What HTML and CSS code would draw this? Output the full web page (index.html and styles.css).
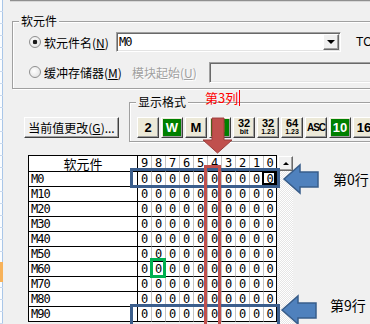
FILE: index.html
```html
<!DOCTYPE html>
<html lang="zh-CN">
<head>
    <meta charset="UTF-8">
    <title>软元件/缓冲存储器批量监视</title>
    <link rel="stylesheet" href="styles.css">
</head>
<body>
    <div class="strip"><div class="strip-mark"></div></div>

    <div class="main">
        <div class="topline"></div>

        <div class="group group-dev">
            <div class="group-title">软元件</div>
            <div class="opt-row opt-first">
                <span class="radio checked"></span>
                <span class="opt-label">软元件名(<u>N</u>)</span>
                <div class="field combo">
                    <span class="field-text">M0</span>
                    <span class="drop-btn"><i class="tri-down"></i></span>
                </div>
                <span class="tc">TC</span>
            </div>
            <div class="opt-row opt-second">
                <span class="radio"></span>
                <span class="opt-label wide">缓冲存储器(<u>M</u>)</span>
                <span class="disabled-label">模块起始(<u>U</u>)</span>
                <div class="field field-off"></div>
            </div>
        </div>

        <div class="mid-row">
            <button class="btn-change">当前值更改(<u>G</u>)...</button>
            <div class="group group-fmt">
                <div class="group-title">显示格式</div>
                <div class="fmt-btns">
                    <span class="fbtn">2</span>
                    <span class="fbtn on">W</span>
                    <span class="fbtn">M</span>
                    <span class="fbtn on">H</span>
                    <span class="fbtn two"><b>32</b><small>bit</small></span>
                    <span class="fbtn two"><b>32</b><small>1.23</small></span>
                    <span class="fbtn two"><b>64</b><small>1.23</small></span>
                    <span class="fbtn asc">ASC</span>
                    <span class="fbtn on">10</span>
                    <span class="fbtn">16</span>
                </div>
            </div>
        </div>

        <div class="monitor">
            <div class="grid" id="grid"></div>
            <div class="vscroll">
                <div class="sb-up"><i class="tri-up"></i></div>
                <div class="sb-track"></div>
            </div>
        </div>
    </div>

    <!-- annotations drawn over the dialog -->
    <div class="mark mark-row0"></div>
    <div class="mark mark-row9"></div>
    <div class="mark cell-focus"></div>
    <div class="mark mark-col4"></div>
    <div class="mark mark-cell"></div>

    <svg class="arrow arrow-down" width="36" height="42" viewBox="0 0 36 42">
        <path d="M12 3 H24 V25 H32 L17.5 38 L3 25 H12 Z" fill="#c0504d" stroke="#9b3c3a" stroke-width="1"/>
    </svg>
    <svg class="arrow arrow-row0" width="40" height="32" viewBox="0 0 40 32">
        <path d="M2 16 L18 2 V9 H36 V24 H18 V30 Z" fill="#4f81bd" stroke="#385d8a" stroke-width="1.5"/>
    </svg>
    <svg class="arrow arrow-row9" width="40" height="32" viewBox="0 0 40 32">
        <path d="M2 16 L18 2 V9 H36 V24 H18 V30 Z" fill="#4f81bd" stroke="#385d8a" stroke-width="1.5"/>
    </svg>

    <div class="note note-col">第3列</div>
    <div class="note note-row0">第0行</div>
    <div class="note note-row9">第9行</div>

    <script>
        const grid = document.getElementById('grid');

        // header: device name + bit numbers 9..0
        let html = '<div class="hd hd-name">软元件</div>';
        for (let b = 9; b >= 0; b--) {
            html += '<div class="hd hd-bit">' + b + '</div>';
        }

        // rows M0..M90, all bits off
        for (let r = 0; r < 10; r++) {
            html += '<div class="nm">M' + r * 10 + '</div>';
            for (let b = 9; b >= 0; b--) {
                html += '<div class="bt">0</div>';
            }
        }

        grid.innerHTML = html;
    </script>
</body>
</html>
```

FILE: styles.css
```css
body {
    margin: 0;
    width: 370px;
    height: 324px;
    overflow: hidden;
    position: relative;
    display: flex;
    background: #f0f0f0;
    font-family: "Noto Sans CJK SC", sans-serif;
    font-size: 12px;
    color: #000;
}

u {
    text-decoration: underline;
}

/* edge of the window behind */
.strip {
    width: 3px;
    flex: none;
    background:
        repeating-linear-gradient(to bottom, transparent 0 11px, #c9d9ee 11px 12px),
        linear-gradient(to right, #fbfdff 0 2px, #a9c6e8 2px);
}

.strip-mark {
    margin-top: 262px;
    height: 20px;
    background: #f7b25a;
}

.main {
    flex: 1;
    min-width: 0;
}

.topline {
    margin-left: 7px;
    height: 1px;
    background: #8f8f8f;
    border-bottom: 1px solid #d8d8d8;
}

/* etched group boxes */
.group {
    box-sizing: border-box;
    border: 1px solid #a0a0a0;
    box-shadow: inset 1px 1px 0 #fff, 1px 1px 0 #fff;
    flex: none;
}

.group-title {
    width: max-content;
    margin: -9px 0 0 6px;
    padding: 0 2px;
    line-height: 16px;
    background: #f0f0f0;
}

.group-dev {
    margin: 19px 0 0 9px;
    width: 400px;
    height: 68px;
}

.opt-row {
    display: flex;
    align-items: center;
    height: 20px;
    padding-left: 16px;
}

.opt-first {
    margin-top: 3px;
}

.opt-second {
    margin-top: 10px;
}

.radio {
    flex: none;
    box-sizing: border-box;
    width: 12px;
    height: 12px;
    margin-right: 3px;
    border: 1px solid #8f8f8f;
    border-radius: 50%;
    background: radial-gradient(circle at 40% 40%, #fff, #dcdcdc);
}

.radio.checked {
    background:
        radial-gradient(circle, #1a1a1a 0 2px, transparent 2.6px),
        radial-gradient(circle at 40% 40%, #fff, #dcdcdc);
}

.opt-label {
    flex: none;
    width: 72px;
}

.opt-label.wide {
    width: 88px;
}

.disabled-label {
    flex: none;
    width: 77px;
    color: #a0a0a0;
    text-shadow: 1px 1px 0 #fff;
}

.field {
    flex: none;
    box-sizing: border-box;
    height: 20px;
    border: 1px solid;
    border-color: #a0a0a0 #fff #fff #a0a0a0;
    box-shadow: inset 1px 1px 0 #696969, inset -1px -1px 0 #e3e3e3;
    background: #fff;
}

.combo {
    width: 225px;
    display: flex;
    align-items: center;
    justify-content: space-between;
    padding: 0 1px 0 2px;
}

.field-text {
    font-family: "DejaVu Sans Mono", monospace;
    letter-spacing: -1px;
}

.drop-btn {
    box-sizing: border-box;
    width: 16px;
    height: 16px;
    display: flex;
    align-items: center;
    justify-content: center;
    background: #f0f0f0;
    border: 1px solid;
    border-color: #fff #696969 #696969 #fff;
    box-shadow: inset -1px -1px 0 #a0a0a0;
}

.tri-down {
    width: 0;
    height: 0;
    border-style: solid;
    border-width: 4px 4px 0;
    border-color: #000 transparent transparent;
}

.tc {
    margin-left: 15px;
    font-family: "Liberation Sans", sans-serif;
}

.field-off {
    width: 200px;
    height: 21px;
    background: #f0f0f0;
}

/* change button + display format */
.mid-row {
    display: flex;
    align-items: flex-start;
    margin-top: 13px;
}

.btn-change {
    flex: none;
    box-sizing: border-box;
    width: 95px;
    height: 21px;
    margin: 15px 0 0 21px;
    padding: 0;
    font: inherit;
    line-height: 18px;
    color: #000;
    background: #f0f0f0;
    border: 1px solid;
    border-color: #fff #404040 #404040 #fff;
    box-shadow: inset -1px -1px 0 #a0a0a0;
}

.group-fmt {
    margin-left: 10px;
    width: 300px;
    height: 40px;
}

.fmt-btns {
    display: flex;
    gap: 2px;
    margin: 7px 0 0 7px;
}

.fbtn {
    flex: none;
    box-sizing: border-box;
    width: 22px;
    height: 21px;
    display: flex;
    flex-direction: column;
    align-items: center;
    justify-content: center;
    border: 1px solid;
    border-color: #fff #404040 #404040 #fff;
    box-shadow: inset -1px -1px 0 #9d9d9d;
    background: #ece9d8;
    font: bold 13px/1 "Liberation Sans", sans-serif;
}

.fbtn.on {
    color: #fff;
    background: #008000;
    box-shadow: inset 1px 1px 0 #ece9d8, inset -1px -1px 0 #9d9d9d;
}

.fbtn.two b {
    font-size: 11px;
    line-height: 9px;
}

.fbtn.two small {
    font-size: 7px;
    line-height: 8px;
    font-weight: bold;
}

.fbtn.asc {
    font-size: 10px;
    letter-spacing: -1px;
}

/* bit monitor table */
.monitor {
    display: flex;
    align-items: flex-start;
    margin: 13px 0 0 25px;
}

.grid {
    display: grid;
    grid-template-columns: 109px repeat(9, 14px) 13px;
    border-top: 1px solid #000;
    border-left: 1px solid #000;
    font-family: "DejaVu Sans Mono", monospace;
}

.grid > div {
    box-sizing: border-box;
    border-right: 1px solid #000;
    border-bottom: 1px solid #000;
    background: #fff;
}

.hd {
    height: 16px;
    line-height: 15px;
    text-align: center;
}

.hd-name {
    font-family: "Noto Sans CJK SC", sans-serif;
    font-size: 13px;
}

.grid > .hd-bit,
.grid > .bt {
    border-right-color: #c4c4c4;
}

.grid > div:nth-child(11n) {
    border-right-color: #000;
}

.nm {
    height: 15px;
    padding-left: 2px;
    line-height: 14px;
    letter-spacing: -1px;
}

.bt {
    line-height: 14px;
    text-align: center;
}

.vscroll {
    width: 15px;
    margin: 1px 0 0 1px;
}

.sb-up {
    box-sizing: border-box;
    height: 15px;
    display: flex;
    align-items: center;
    justify-content: center;
    background: #f0f0f0;
    border: 1px solid;
    border-color: #fff #696969 #696969 #fff;
    box-shadow: inset -1px -1px 0 #a0a0a0;
}

.tri-up {
    width: 0;
    height: 0;
    border-style: solid;
    border-width: 0 3px 3px;
    border-color: transparent transparent #000;
}

.sb-track {
    height: 170px;
    background: conic-gradient(#fff 25%, #e6e6e6 0 50%, #fff 0 75%, #e6e6e6 0);
    background-size: 2px 2px;
}

/* annotations */
.mark {
    position: absolute;
    box-sizing: border-box;
}

.mark-row0 {
    left: 130px;
    top: 168px;
    width: 150px;
    height: 20px;
    border: 3px solid #3b5e8c;
}

.mark-row9 {
    left: 130px;
    top: 304px;
    width: 150px;
    height: 30px;
    border: 3px solid #3b5e8c;
}

.cell-focus {
    left: 262px;
    top: 171px;
    width: 14px;
    height: 14px;
    border: 2px solid #000;
}

.mark-col4 {
    left: 204px;
    top: 165px;
    width: 17px;
    height: 170px;
    border: 3px solid #c0504d;
}

.mark-cell {
    left: 150px;
    top: 258px;
    width: 16px;
    height: 20px;
    border: 3px solid #00b050;
}

.arrow {
    position: absolute;
}

.arrow-down {
    left: 200px;
    top: 115px;
}

.arrow-row0 {
    left: 282px;
    top: 163px;
}

.arrow-row9 {
    left: 280px;
    top: 294px;
}

.note {
    position: absolute;
    font-size: 14px;
    line-height: 16px;
}

.note-col {
    left: 205px;
    top: 90px;
    font-size: 13px;
    color: #f00;
    padding-right: 1px;
    border-right: 1px solid #f00;
}

.note-row0 {
    left: 333px;
    top: 171px;
}

.note-row9 {
    left: 330px;
    top: 297px;
}
```
